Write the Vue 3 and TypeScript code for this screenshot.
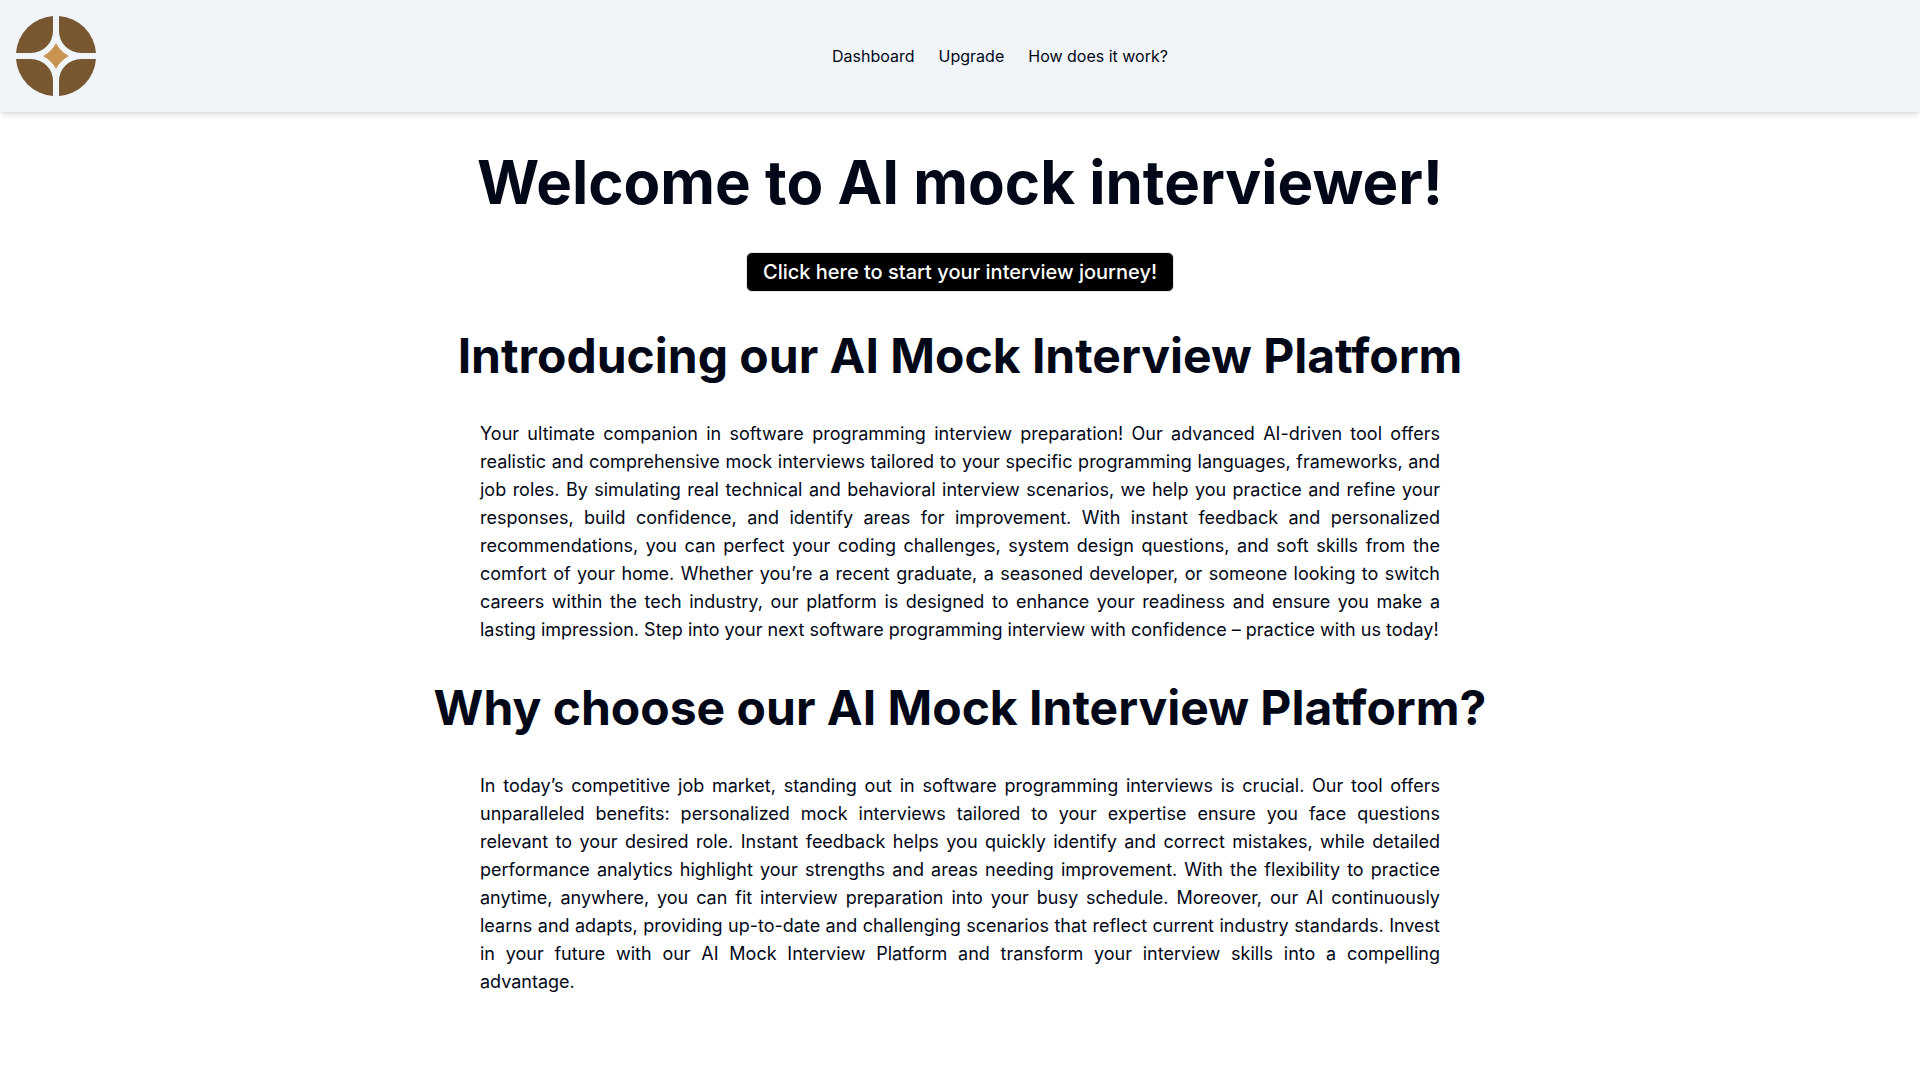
<script setup lang="ts">
interface NavLink {
  label: string
  href: string
}

interface Section {
  title: string
  body: string
}

const links: NavLink[] = [
  { label: 'Dashboard', href: '#dashboard' },
  { label: 'Upgrade', href: '#upgrade' },
  { label: 'How does it work?', href: '#how' },
]

const sections: Section[] = [
  {
    title: 'Introducing our AI Mock Interview Platform',
    body: 'Your ultimate companion in software programming interview preparation! Our advanced AI-driven tool offers realistic and comprehensive mock interviews tailored to your specific programming languages, frameworks, and job roles. By simulating real technical and behavioral interview scenarios, we help you practice and refine your responses, build confidence, and identify areas for improvement. With instant feedback and personalized recommendations, you can perfect your coding challenges, system design questions, and soft skills from the comfort of your home. Whether you’re a recent graduate, a seasoned developer, or someone looking to switch careers within the tech industry, our platform is designed to enhance your readiness and ensure you make a lasting impression. Step into your next software programming interview with confidence – practice with us today!',
  },
  {
    title: 'Why choose our AI Mock Interview Platform?',
    body: 'In today’s competitive job market, standing out in software programming interviews is crucial. Our tool offers unparalleled benefits: personalized mock interviews tailored to your expertise ensure you face questions relevant to your desired role. Instant feedback helps you quickly identify and correct mistakes, while detailed performance analytics highlight your strengths and areas needing improvement. With the flexibility to practice anytime, anywhere, you can fit interview preparation into your busy schedule. Moreover, our AI continuously learns and adapts, providing up-to-date and challenging scenarios that reflect current industry standards. Invest in your future with our AI Mock Interview Platform and transform your interview skills into a compelling advantage.',
  },
]
</script>

<template>
  <div class="page">
    <header class="header">
      <svg class="logo" viewBox="0 0 80 80" aria-hidden="true">
        <g fill="#785730">
          <path d="M37 0V15A22 22 0 0 1 15 37H0A40 40 0 0 1 37 0Z" />
          <path d="M43 0V15A22 22 0 0 0 65 37H80A40 40 0 0 0 43 0Z" />
          <path d="M37 80V65A22 22 0 0 0 15 43H0A40 40 0 0 0 37 80Z" />
          <path d="M43 80V65A22 22 0 0 1 65 43H80A40 40 0 0 1 43 80Z" />
        </g>
        <path
          fill="#c99352"
          d="M40 27A29 29 0 0 0 53 40A29 29 0 0 0 40 53A29 29 0 0 0 27 40A29 29 0 0 0 40 27Z"
        />
      </svg>
      <nav class="nav">
        <a v-for="link in links" :key="link.label" class="nav-link" :href="link.href">{{ link.label }}</a>
      </nav>
      <div></div>
    </header>

    <main class="content">
      <h1 class="title">Welcome to AI mock interviewer!</h1>
      <button class="start" type="button">Click here to start your interview journey!</button>
      <template v-for="section in sections" :key="section.title">
        <h2 class="heading">{{ section.title }}</h2>
        <p class="text">{{ section.body }}</p>
      </template>
    </main>
  </div>
</template>

<style>
body {
  margin: 0;
  background: #ffffff;
}
</style>

<style scoped>
.page {
  font-family: Inter, "Liberation Sans", sans-serif;
  font-size: 16px;
  line-height: 24px;
  color: #020817;
}

.header {
  display: flex;
  align-items: center;
  justify-content: space-between;
  padding: 16px;
  background: #f1f5f9;
  box-shadow: 0 4px 6px -1px rgb(0 0 0 / 0.1), 0 2px 4px -2px rgb(0 0 0 / 0.1);
}

.logo {
  display: block;
  width: 80px;
  height: 80px;
}

.nav {
  display: flex;
  gap: 24px;
}

.nav-link {
  color: inherit;
  text-decoration: none;
}

.content {
  display: flex;
  flex-direction: column;
  align-items: center;
  gap: 40px;
  padding: 40px 0;
}

.title,
.heading {
  margin: 0;
  font-weight: 700;
  text-align: center;
}

.title {
  font-size: 60px;
  line-height: 60px;
}

.heading {
  font-size: 48px;
  line-height: 48px;
}

.start {
  height: 40px;
  padding: 0 16px;
  border: 1px solid #e2e8f0;
  border-radius: 6px;
  background: #000000;
  color: #ffffff;
  font-family: inherit;
  font-size: 20px;
  font-weight: 500;
  line-height: 28px;
  cursor: pointer;
}

.text {
  width: 50%;
  margin: 0;
  font-size: 18px;
  line-height: 28px;
  text-align: justify;
}
</style>
